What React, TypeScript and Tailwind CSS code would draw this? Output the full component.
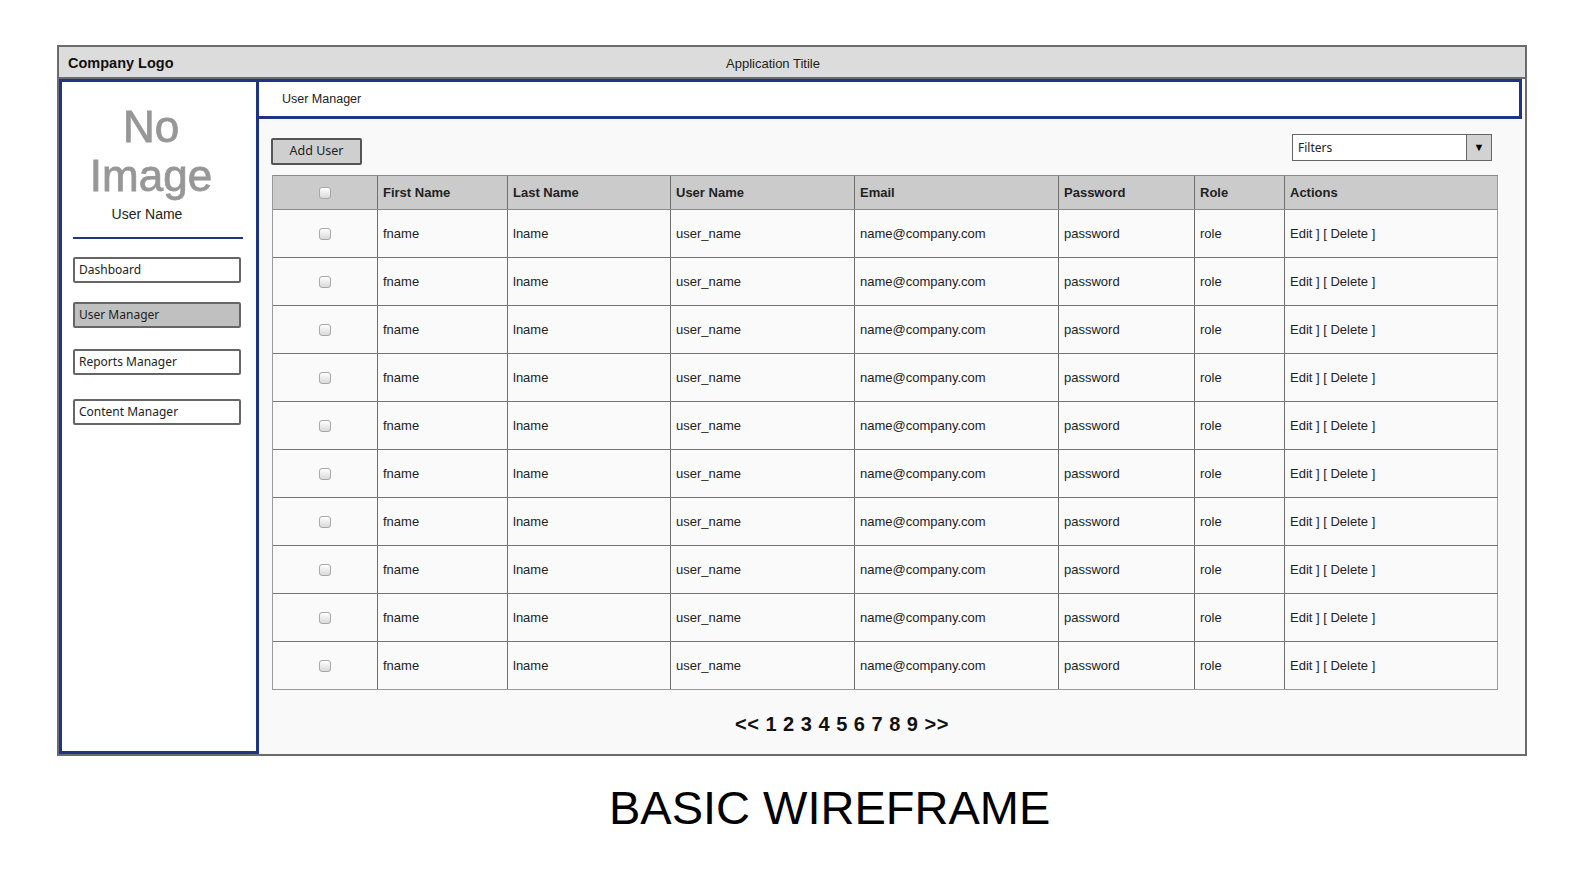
import React from "react";

const cols = [
  { key: "check", label: "", w: "w-[105px]" },
  { key: "first", label: "First Name", w: "w-[130px]" },
  { key: "last", label: "Last Name", w: "w-[163px]" },
  { key: "user", label: "User Name", w: "w-[184px]" },
  { key: "email", label: "Email", w: "w-[204px]" },
  { key: "pass", label: "Password", w: "w-[136px]" },
  { key: "role", label: "Role", w: "w-[90px]" },
  { key: "actions", label: "Actions", w: "w-[213px]" },
];

const row: Record<string, string> = {
  first: "fname",
  last: "lname",
  user: "user_name",
  email: "name@company.com",
  pass: "password",
  role: "role",
  actions: "Edit ] [ Delete ]",
};

const sketch = "font-['Comic_Sans_MS','Noto_Sans',sans-serif]";

function Checkbox() {
  return (
    <span className="block w-[12px] h-[12px] rounded-[3px] border border-[#a8a8a8] bg-linear-to-b from-[#ffffff] to-[#d9d9d9]" />
  );
}

function NavItem({ label, active, className }: { label: string; active?: boolean; className: string }) {
  return (
    <div
      className={`ml-[11px] w-[168px] h-[26px] flex items-center pl-[4px] border-2 border-[#666] rounded-[2px] text-[12px] text-[#222] ${sketch} ${
        active ? "bg-[#c0c0c0]" : "bg-white"
      } ${className}`}
    >
      {label}
    </div>
  );
}

export default function App() {
  return (
    <div className="w-[1590px] h-[875px] bg-white pt-[45px] font-['Liberation_Sans',Arial,sans-serif] text-[#1a1a1a]">
      {/* Wireframe frame */}
      <div className="ml-[57px] w-[1470px] h-[711px] border-2 border-[#6b6b6b] flex flex-col">
        {/* Header bar */}
        <div className="h-[32px] shrink-0 bg-[#dcdcdc] border-b-2 border-[#6b6b6b] flex items-center pl-[9px] pt-[3px]">
          <div className="w-[658px] text-[14.5px] font-bold text-[#111]">Company Logo</div>
          <div className="text-[13px] text-[#222]">Application Titile</div>
        </div>

        <div className="flex flex-1 min-h-0">
          {/* Sidebar */}
          <aside className="w-[200px] shrink-0 bg-white border-[3px] border-[#1f3584] flex flex-col pt-[20px]">
            <div className="text-center pr-[16px] text-[44px] leading-[49px] text-[#979797] blur-[0.5px] [-webkit-text-stroke:0.8px_#979797]">
              <div>No</div>
              <div>Image</div>
            </div>
            <div className="mt-[6px] text-center pr-[24px] text-[14px] leading-[16px] text-[#222]">User Name</div>
            <div className="mt-[15px] ml-[11px] w-[170px] h-[2px] bg-[#1f3584]" />
            <NavItem label="Dashboard" className="mt-[18px]" />
            <NavItem label="User Manager" active className="mt-[19px]" />
            <NavItem label="Reports Manager" className="mt-[21px]" />
            <NavItem label="Content Manager" className="mt-[24px]" />
          </aside>

          {/* Main */}
          <main className="flex-1 bg-[#f9f9f9] flex flex-col">
            <div className="h-[40px] mr-[3px] bg-white border-y-[3px] border-r-[3px] border-[#1f3584] flex items-center pl-[23px] text-[12.5px] text-[#222]">
              User Manager
            </div>

            <div className="pl-[13px] pt-[15px]">
              {/* Toolbar */}
              <div className="w-[1225px] flex justify-between items-start">
                <button
                  className={`mt-[4px] -ml-[1px] w-[91px] h-[27px] bg-[#cfcfcf] border-2 border-[#555] rounded-[2px] text-[12.5px] text-[#222] ${sketch}`}
                >
                  Add User
                </button>
                <div className="mr-[5px] w-[200px] h-[27px] flex bg-white border-[1.5px] border-[#666]">
                  <div className={`flex-1 flex items-center pl-[5px] text-[12px] text-[#222] ${sketch}`}>Filters</div>
                  <div className="w-[25px] bg-[#d2d2d2] border-l-[1.5px] border-[#666] flex items-center justify-center text-[11px] text-black">
                    ▼
                  </div>
                </div>
              </div>

              {/* Table */}
              <div className="mt-[10px] w-[1226px] border-l border-[#9a9a9a]">
                <div className="flex h-[35px] bg-[#cbcbcb] border-t border-b border-[#8a8a8a]">
                  {cols.map((c, i) => (
                    <div
                      key={c.key}
                      className={`${c.w} h-full flex items-center border-r ${
                        i === cols.length - 1 ? "border-[#9a9a9a]" : "border-[#6f6f6f]"
                      } ${i === 0 ? "justify-center" : "pl-[5px]"} text-[13px] font-bold text-[#222]`}
                    >
                      {i === 0 ? <Checkbox /> : c.label}
                    </div>
                  ))}
                </div>
                {Array.from({ length: 10 }).map((_, r) => (
                  <div
                    key={r}
                    className={`flex h-[48px] bg-[#fafafa] border-b ${r === 9 ? "border-[#9a9a9a]" : "border-[#777]"}`}
                  >
                    {cols.map((c, i) => (
                      <div
                        key={c.key}
                        className={`${c.w} h-full flex items-center border-r ${
                          i === cols.length - 1 ? "border-[#9a9a9a]" : "border-[#6f6f6f]"
                        } ${i === 0 ? "justify-center" : "pl-[5px]"} text-[13px] text-[#222]`}
                      >
                        {i === 0 ? <Checkbox /> : row[c.key]}
                      </div>
                    ))}
                  </div>
                ))}
              </div>

              {/* Pagination */}
              <div className="mt-[24px] pl-[463px] text-[20px] leading-none font-bold tracking-[0.5px] text-[#111]">
                &lt;&lt; 1 2 3 4 5 6 7 8 9 &gt;&gt;
              </div>
            </div>
          </main>
        </div>
      </div>

      <div className="mt-[28px] pl-[609px] text-[47px] leading-none text-black">BASIC WIREFRAME</div>
    </div>
  );
}
